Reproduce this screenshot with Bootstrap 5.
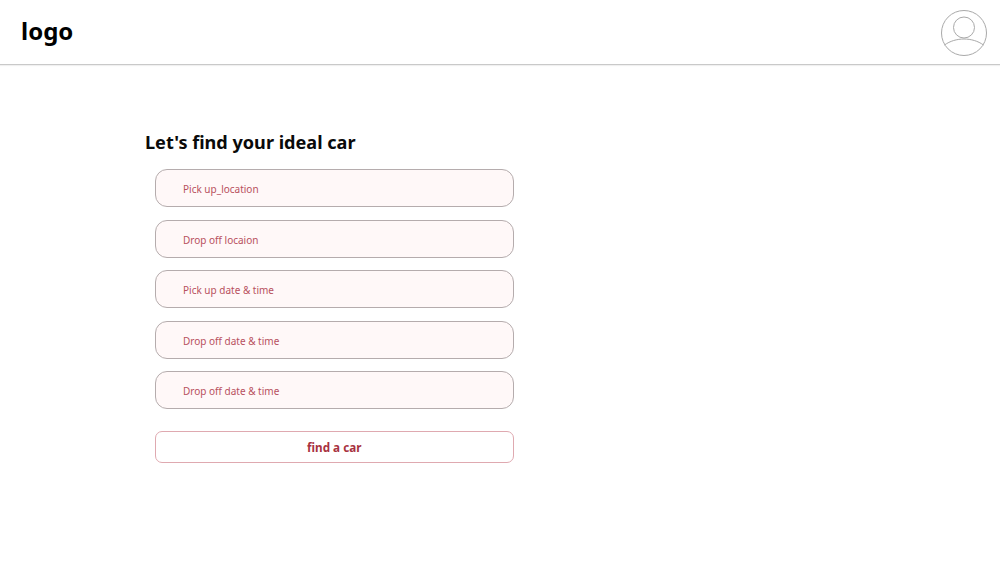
<!DOCTYPE html>
<html lang="en">
<head>
<meta charset="utf-8">
<title>Find a car</title>
<link rel="stylesheet" href="https://cdn.jsdelivr.net/npm/bootstrap@5.3.0/dist/css/bootstrap.min.css">
<style>
body { font-family: "Noto Sans", "Open Sans", sans-serif; background: #fff; }
.top-bar { height: 65px; border-bottom: 1px solid #c9c9c9; box-shadow: 0 1px 1px rgba(0,0,0,.06); padding: 0 12px 0 21px; }
.brand-word { font-size: 24px; font-weight: 700; color: #000; line-height: 1; margin-top: -2px; }
.avatar-svg { width: 48px; height: 48px; margin-top: 2px; display: block; }
.finder { width: 369px; margin: 64px 0 0 145px; }
.finder-title { font-size: 18.1px; font-weight: 700; color: #0a0a0a; line-height: 26px; margin: 0 0 14px; }
.finder-form { margin-left: 9.5px; display: flex; flex-direction: column; gap: 12.6px; }
.finder-input.form-control { height: 38px; border: 1px solid #b5acad; border-radius: 12px; background: #fff8f8; padding: 2px 27.5px 0; font-size: 10px; color: #b8505e; box-shadow: none; }
.finder-input.form-control::placeholder { color: #b8505e; opacity: 1; }
.finder-btn.btn { height: 32px; margin-top: 9.4px; border: 1px solid #dfa9b0; border-radius: 7px; background: #fff; color: #a8323f; font-size: 11.7px; font-weight: 700; padding: 0; }
</style>
</head>
<body>
<header class="top-bar d-flex align-items-center justify-content-between">
  <div class="brand-word">logo</div>
  <svg class="avatar-svg" viewBox="0 0 48 48" fill="none" stroke="#a9a9a9" stroke-width="1" aria-label="profile">
    <circle cx="24" cy="24" r="22.5"/>
    <circle cx="24" cy="18.5" r="10.5"/>
    <path d="M4.5 36 C10 32 17 30 24 30 C31 30 38 32 43.5 36"/>
  </svg>
</header>
<main class="finder">
  <h1 class="finder-title">Let's find your ideal car</h1>
  <form class="finder-form">
    <input class="form-control finder-input" type="text" placeholder="Pick up_location">
    <input class="form-control finder-input" type="text" placeholder="Drop off locaion">
    <input class="form-control finder-input" type="text" placeholder="Pick up date &amp; time">
    <input class="form-control finder-input" type="text" placeholder="Drop off date &amp; time">
    <input class="form-control finder-input" type="text" placeholder="Drop off date &amp; time">
    <button class="btn finder-btn" type="button">find a car</button>
  </form>
</main>
<script src="https://cdn.jsdelivr.net/npm/bootstrap@5.3.0/dist/js/bootstrap.bundle.min.js"></script>
</body>
</html>
